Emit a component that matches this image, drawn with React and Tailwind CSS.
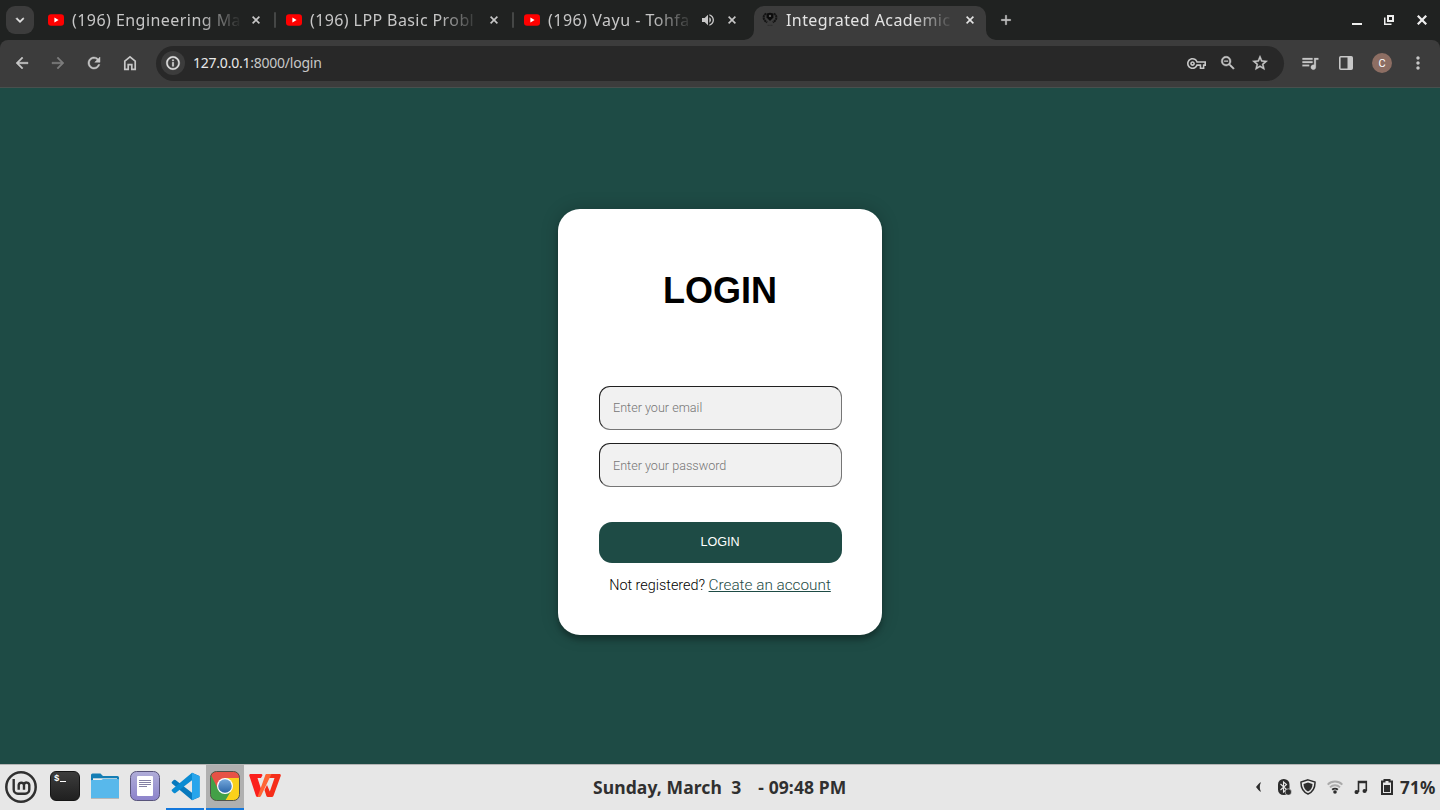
import React from "react";
import {
  MdArrowBack,
  MdArrowForward,
  MdRefresh,
  MdInfoOutline,
  MdOutlineVpnKey,
  MdZoomOut,
  MdStarBorder,
  MdQueueMusic,
  MdMoreVert,
  MdKeyboardArrowDown,
  MdVolumeUp,
  MdAdd,
} from "react-icons/md";

// Slightly heavier rendering of a Material icon; its empty bounding path stays unstroked.
const Glyph = ({ icon: Icon, size = 18, weight = 0.6, className = "" }) => (
  <Icon
    size={size}
    stroke="currentColor"
    strokeWidth={weight}
    className={`shrink-0 [&>path[fill=none]]:stroke-none ${className}`}
  />
);

const YouTube = () => (
  <svg width="16" height="16" viewBox="0 0 16 16" className="shrink-0">
    <rect y="2.3" width="16" height="11.4" rx="3" fill="#f00" />
    <path d="M6.4 5.6v4.8L10.6 8z" fill="#fff" />
  </svg>
);

const Crest = () => (
  <svg width="16" height="16" viewBox="0 0 16 16" className="shrink-0" fill="none">
    <path d="M4.200 1.500C.6 3.500.6 8 5.200 10.300M11.800 1.500c3.600 2 3.600 6.500-1 8.800" stroke="#141414" strokeWidth="2" strokeDasharray="2.200 .4" />
    <path d="M4.600 1.600 8 .8l3.400.8v4L8 9 4.600 5.600z" fill="#0c0c0c" />
    <circle cx="8" cy="3.900" r="1.200" fill="#555" />
    <path d="M5.500 13.300h5" stroke="#2b2b2b" strokeDasharray="1.400 .4" />
  </svg>
);

const Cross = ({ size = 8, width = 1.6 }) => (
  <svg width={size} height={size} viewBox="0 0 8 8" fill="none" stroke="currentColor" strokeWidth={width}>
    <path d="m.6.6 6.8 6.8M7.4.6.6 7.4" />
  </svg>
);

function Tab({ title, audio, divider, spacing }) {
  return (
    <div className="flex h-10 w-[238px] shrink-0 items-center pl-[10px] text-[#c7c7c7]">
      <YouTube />
      <div
        className={`ml-2 h-6 shrink-0 whitespace-nowrap text-[16px] leading-6 ${spacing} ${
          audio
            ? "w-[144px] [mask-image:linear-gradient(to_right,#000_104px,transparent_146px)]"
            : "w-[168px] [mask-image:linear-gradient(to_right,#000_128px,transparent_170px)]"
        }`}
      >
        {title}
      </div>
      <span className={audio ? "ml-2 w-4" : "hidden"}>
        <MdVolumeUp size={16} />
      </span>
      <span className="ml-3 flex w-2 justify-center">
        <Cross />
      </span>
      {divider && <span className="ml-[14px] h-4 w-[2px] rounded bg-[#454746]" />}
    </div>
  );
}

const Flare = ({ className, d }) => (
  <svg width="10" height="10" viewBox="0 0 10 10" className={`absolute bottom-0 ${className}`}>
    <path d={d} fill="#3c3c3c" />
  </svg>
);

function TabStrip() {
  return (
    <div className="flex h-10 items-center bg-[#202221] pl-[6px]">
      <div className="mr-1 flex h-7 w-7 shrink-0 items-center justify-center rounded-[9px] bg-[#3c3c3c] text-[#e5e5e5]">
        <Glyph icon={MdKeyboardArrowDown} size={16} weight={0.8} />
      </div>
      <Tab title="(196) Engineering Ma" divider spacing="tracking-[0.45px]" />
      <Tab title="(196) LPP Basic Probl" divider spacing="tracking-[0.4px]" />
      <Tab title="(196) Vayu - Tohfa" audio spacing="tracking-[0.5px]" />
      <div className="relative ml-[2px] mt-[6px] flex h-[34px] w-[232px] shrink-0 items-center rounded-t-[10px] bg-[#3c3c3c] pb-[6px] pl-2 text-[#e3e3e3]">
        <Flare className="-left-[10px]" d="M10 0v10H0A10 10 0 0 0 10 0z" />
        <Flare className="-right-[10px]" d="M0 0v10h10A10 10 0 0 1 0 0z" />
        <Crest />
        <div className="ml-2 h-6 w-[166px] whitespace-nowrap text-[16px] leading-6 tracking-[0.42px] [mask-image:linear-gradient(to_right,#000_126px,transparent_168px)]">
          Integrated Academic
        </div>
        <span className="ml-[14px] flex">
          <Cross />
        </span>
      </div>
      <Glyph icon={MdAdd} size={16} className="ml-3 text-[#c7c7c7]" />
      <div className="ml-auto mr-[13px] flex items-center text-[#eee]">
        <span className="mr-[22px] mt-[7px] h-[2px] w-[10px] bg-current" />
        <svg width="10" height="10" viewBox="0 0 10 10" className="mr-[23px]" fill="none" stroke="currentColor">
          <rect x="4" y="1" width="5" height="5" strokeWidth="2" />
          <path d="M.75 2.5v6.75H7.5" strokeWidth="1.5" />
        </svg>
        <Cross size={10} width={1.8} />
      </div>
    </div>
  );
}

function Toolbar() {
  return (
    <div className="bg-[#202221]">
      <div className="flex h-12 items-start rounded-t-[8px] border-b border-[#48504e] bg-[#3c3c3c] pt-[6px] text-[#c7c7c7]">
        <div className="flex h-[34px] w-[156px] shrink-0 items-center gap-[18px] pl-[13px]">
          <Glyph icon={MdArrowBack} />
          <Glyph icon={MdArrowForward} className="text-[#7d7d7d]" />
          <Glyph icon={MdRefresh} />
          <svg width="18" height="18" viewBox="0 0 18 18" fill="none" stroke="currentColor" strokeWidth="1.700">
            <path d="M3.800 7.200 9 2.800l5.200 4.400v8.200h-3.400v-4.800H7.200v4.800H3.800z" />
          </svg>
        </div>
        <div className="flex h-[35px] w-[1128px] shrink-0 items-center rounded-full bg-[#282828] pb-px pl-[5px] pr-[15px]">
          <span className="flex h-6 w-6 items-center justify-center rounded-full bg-[#3c3c3c] text-[#e3e3e3]">
            <Glyph icon={MdInfoOutline} size={16} />
          </span>
          <span className="ml-2 text-[14px] leading-5 tracking-[-0.23px] text-[#c7c7c7]">
            <span className="text-[#e8e8e8]">127.0.0.1</span>:8000/login
          </span>
          <div className="ml-auto flex items-center gap-[14px]">
            <MdOutlineVpnKey size={19} className="-mr-px" />
            <Glyph icon={MdZoomOut} />
            <Glyph icon={MdStarBorder} />
          </div>
        </div>
        <div className="flex h-[34px] flex-1 items-center pl-[16px]">
          <Glyph icon={MdQueueMusic} size={20} weight={0.3} />
          <svg width="16" height="16" viewBox="0 0 16 16" className="ml-[18px]" fill="none">
            <rect x="1.800" y="1.800" width="12.400" height="12.400" rx="1" stroke="currentColor" strokeWidth="1.600" />
            <path d="M9.500 2H14v12H9.500z" fill="currentColor" />
          </svg>
          <span className="ml-[18px] flex h-5 w-5 items-center justify-center rounded-full bg-[#8d6e63] pt-px font-[Roboto] text-[11px] leading-none text-white">
            C
          </span>
          <MdMoreVert size={20} className="ml-4" />
        </div>
      </div>
    </div>
  );
}

const field =
  "block h-[44px] w-[243px] rounded-[11px] border border-t-[#202020] border-l-[#202020] border-r-[#767676] border-b-[#767676] bg-[#f1f1f1] px-[13px] text-[12.6px] font-light text-black outline-none placeholder:text-[#757575]";

function LoginCard() {
  return (
    <form className="flex h-[426px] w-[324px] flex-col items-center rounded-[22px] bg-white pt-[61px] font-[Roboto] shadow-[0_0_18px_rgba(0,0,0,0.2),0_5px_5px_rgba(0,0,0,0.24)]">
      <h1 className="h-[42px] font-['Liberation_Sans'] text-[36px] font-bold leading-[42px] text-black">LOGIN</h1>
      <div className="mt-[74px] flex flex-col gap-[13px] pl-px">
        <input className={`${field} pb-[2px]`} type="email" placeholder="Enter your email" />
        <input className={field} type="password" placeholder="Enter your password" />
      </div>
      <button
        type="button"
        className="ml-px mt-[35px] h-[41px] w-[243px] rounded-[13px] bg-[#1e4b45] pr-px font-['Liberation_Sans'] text-[12.6px] text-white"
      >
        LOGIN
      </button>
      <p className="mt-[12px] whitespace-nowrap text-[14.4px] font-light leading-5 text-black">
        Not registered?{" "}
        <a className="text-[15.3px] text-[#1e4b45] underline">Create an account</a>
      </p>
    </form>
  );
}

const Mint = () => (
  <svg width="32" height="32" viewBox="0 0 32 32" fill="none" stroke="#303030">
    <circle cx="16" cy="16" r="14.700" strokeWidth="2.500" />
    <path d="M8.700 8v10.500a4.200 4.200 0 0 0 4.200 4.200h7.200a4.200 4.200 0 0 0 4.200-4.200V14a2.700 2.700 0 0 0-5.300-.4v5.200M19 14a2.700 2.700 0 0 0-5.300 0v4.800" strokeWidth="2.400" strokeLinejoin="round" />
  </svg>
);

const Terminal = () => (
  <div className="flex h-[30px] w-[30px] items-start rounded-[6px] border border-[#151515] bg-linear-to-b from-[#3d3d3d] to-[#202020] pl-[3px] pt-[2px] font-['Liberation_Mono'] text-[9px] font-bold leading-[10px] text-white">
    $<span className="ml-px mt-[7px] h-px w-[6px] bg-white" />
  </div>
);

const Folder = () => (
  <svg width="28" height="28" viewBox="0 0 28 28">
    <path d="M0 3A1.500 1.500 0 0 1 1.500 1.500h8L12 4h14.500A1.500 1.500 0 0 1 28 5.500V12H0z" fill="#147db4" />
    <path d="M2 6.300h24V12H2z" fill="#eee" />
    <path d="M0 9a1 1 0 0 1 1-1h26a1 1 0 0 1 1 1v17H0z" fill="#58b8eb" />
    <path d="M0 8.500h9.500L12 7h15a1 1 0 0 1 1 1v3H0z" fill="#58b8eb" />
    <path d="M0 26.500h28" stroke="#b7b7b7" />
  </svg>
);

const Notes = () => (
  <svg width="30" height="30" viewBox="0 0 30 30">
    <defs>
      <linearGradient id="notes" x2="0" y2="1">
        <stop stopColor="#b0add8" />
        <stop offset="1" stopColor="#8c83cb" />
      </linearGradient>
    </defs>
    <rect x=".5" y=".5" width="29" height="29" rx="6" fill="url(#notes)" stroke="#58547a" />
    <rect x="7" y="5" width="16" height="20" rx="1" fill="#fff" />
    <path d="M9 9.500h12M9 11.500h12M9 13.500h12M9 15.500h8" stroke="#655f8c" strokeWidth=".8" />
  </svg>
);

const Code = () => (
  <svg width="29" height="29" viewBox="0 0 29 29">
    <path d="M21 .7 28.500 4v21L21 28.300 1 11.500a1.200 1.200 0 0 1 0-1.700L2.800 8a1.300 1.300 0 0 1 1.700 0L21 20.700z" fill="#0879bd" />
    <path d="M21 8.300 4.500 21a1.300 1.300 0 0 1-1.700 0L1 19.200a1.200 1.200 0 0 1 0-1.700L21 .7z" fill="#0b8bd2" />
    <path d="M21 .7 28 4a1 1 0 0 1 .6 1v19a1 1 0 0 1-.6 1l-7 3.300z" fill="#27a5ec" />
  </svg>
);

const Chrome = () => (
  <svg width="30" height="30" viewBox="0 0 30 30">
    <defs>
      <clipPath id="tile">
        <rect x=".5" y=".5" width="29" height="29" rx="6" />
      </clipPath>
      <linearGradient id="lens" x2="0" y2="1">
        <stop stopColor="#74a8dc" />
        <stop offset="1" stopColor="#2d67a9" />
      </linearGradient>
    </defs>
    <g clipPath="url(#tile)">
      <path d="M0 0h30v30H0z" fill="#fbd11b" />
      <path d="M0 0h30v7H15L7.500 19 0 4z" fill="#e75245" />
      <path d="M0 2 8 18l7 5 6-3-6 10H0z" fill="#43a047" />
    </g>
    <circle cx="15" cy="15" r="8" fill="#fff" />
    <circle cx="15" cy="15" r="6.800" fill="url(#lens)" />
    <rect x=".5" y=".5" width="29" height="29" rx="6" fill="none" stroke="#50534a" />
  </svg>
);

const Office = () => (
  <svg width="32" height="26" viewBox="0 0 32 26">
    <path d="M1.500 1H12a1.300 1.300 0 0 1 1.200 1.800L12 5H8.500l4.500 14-2.200 4c-.4.700-.8 1-1.600 1H8.500c-.7 0-1.200-.3-1.500-1L.4 3C0 2 .5 1 1.500 1z" fill="#fb1f1c" />
    <path d="M19 1h11.500c1 0 1.600 1 1.200 2l-7.300 20c-.3.700-.8 1-1.500 1h-4c-.7 0-1.200-.3-1.500-1L15.500 17l2.500-5 2.800 6.500L25.500 5H18z" fill="#f52d19" />
    <path d="M17 1h5.500L12.200 22.500c-.5 1-1.200 1.500-2.200 1.500H8.500L16 3c.3-1 .5-1.600 1-2z" fill="#ff6535" />
  </svg>
);

const Cell = ({ children, state = "pb-[3px]" }) => (
  <div className={`flex h-[45px] w-[38px] items-center justify-center ${state}`}>{children}</div>
);

function Tray() {
  return (
    <div className="flex h-[45px] flex-1 items-center justify-end pb-px pr-[4px] text-[#2d2d2d]">
      <svg width="5" height="10" viewBox="0 0 5 10" className="mr-[17px]" fill="currentColor">
        <path d="M4.600 0v1.200Q3.800 3 3.800 5t.8 3.800V10Q2 7.800 0 5 2 2.200 4.600 0z" />
      </svg>
      <svg width="14" height="16" viewBox="0 0 14 16" className="mr-[8px]">
        <rect x="0" y="0" width="11.500" height="16" rx="5.500" fill="currentColor" />
        <path d="m2.500 5 6 5.500-3 2.500V3l3 2.500-6 5.500" stroke="#e8e8e8" strokeWidth="1.100" fill="none" />
        <circle cx="10.300" cy="13" r="3.200" fill="currentColor" stroke="#e8e8e8" strokeWidth=".6" />
      </svg>
      <svg width="16" height="16" viewBox="0 0 16 16" className="mr-[11px]">
        <path d="M8 .9 15 3c.2 5.800-2 9.800-7 12C3 12.800.8 8.800 1 3z" fill="none" stroke="currentColor" strokeWidth="1.500" />
        <path d="m8 3.500 4.500 1.400c0 3.600-1.500 6-4.500 7.600-3-1.600-4.500-4-4.500-7.600z" fill="currentColor" />
      </svg>
      <svg width="16" height="14" viewBox="0 0 16 14" className="mr-[11px]" fill="none" strokeWidth="1.900">
        <path d="M.7 4.600a10.300 10.300 0 0 1 14.600 0M3 7.300a7 7 0 0 1 10 0" stroke="#aaa" />
        <path d="M5.200 9.800a4 4 0 0 1 5.600 0" stroke="currentColor" />
        <circle cx="8" cy="12" r="1.800" fill="currentColor" />
      </svg>
      <svg width="14" height="14" viewBox="0 0 14 14" className="mr-[13px]">
        <path d="M4.500 12V1.500h7.800V11M4.500 2.500h7.800" stroke="currentColor" strokeWidth="1.600" fill="none" />
        <circle cx="2.600" cy="12" r="2.100" fill="currentColor" />
        <circle cx="10.600" cy="11" r="2.100" fill="currentColor" />
      </svg>
      <svg width="12" height="16" viewBox="0 0 12 16" className="mr-[7px]">
        <path d="M1 2.500h2.500V1h5v1.500H11V15H1z" fill="none" stroke="currentColor" strokeWidth="2" />
        <path d="M3 6h6v7H3z" fill="currentColor" />
      </svg>
      <span className="w-9 whitespace-nowrap pt-px text-[17px] font-bold tracking-[0.3px]">71%</span>
    </div>
  );
}

function Taskbar() {
  return (
    <div className="flex h-[46px] items-start border-t border-[#b4b4b4] bg-[#e7e7e7]">
      <div className="flex flex-1 items-start gap-[2px]">
        <div className="flex h-[45px] w-11 items-center pb-px pl-[5px]">
          <Mint />
        </div>
        <Cell><Terminal /></Cell>
        <Cell><Folder /></Cell>
        <Cell><Notes /></Cell>
        <Cell state="border-b-2 border-[#1478dc] pb-px"><Code /></Cell>
        <Cell state="border-b-2 border-[#1478dc] bg-[#b0b0b0] pb-px"><Chrome /></Cell>
        <Cell state="pb-[4px]"><Office /></Cell>
      </div>
      <div className="h-[45px] w-[256px] whitespace-pre pl-[3px] text-[17.500px] font-bold leading-[44px] tracking-[0.100px] text-[#303030]">
        Sunday, March  3 <span className="ml-[3px]">  - 09:48 PM</span>
      </div>
      <Tray />
    </div>
  );
}

export default function App() {
  return (
    <div className="flex h-[810px] w-[1440px] flex-col overflow-hidden font-['Noto_Sans',sans-serif]">
      <TabStrip />
      <Toolbar />
      <main className="flex flex-1 justify-center bg-[#1e4b45] pt-[121px]">
        <LoginCard />
      </main>
      <Taskbar />
    </div>
  );
}
